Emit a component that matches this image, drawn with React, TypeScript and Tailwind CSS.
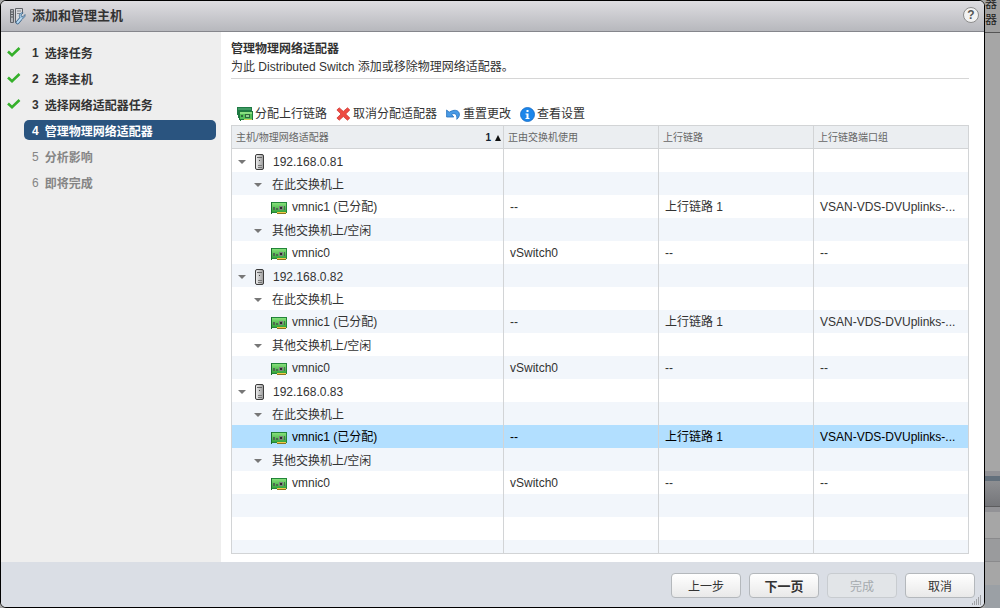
import type { ReactNode } from "react";

type Step = { label: string; state: "done" | "active" | "todo" };

const steps: Step[] = [
  { label: "选择任务", state: "done" },
  { label: "选择主机", state: "done" },
  { label: "选择网络适配器任务", state: "done" },
  { label: "管理物理网络适配器", state: "active" },
  { label: "分析影响", state: "todo" },
  { label: "即将完成", state: "todo" },
];

type Row = {
  kind: "host" | "group" | "nic" | "empty";
  name: string;
  usedBy?: string;
  uplink?: string;
  portGroup?: string;
  selected?: boolean;
};

const hosts = ["192.168.0.81", "192.168.0.82", "192.168.0.83"];

const rows: Row[] = [
  ...hosts.flatMap((host): Row[] => [
    { kind: "host", name: host },
    { kind: "group", name: "在此交换机上" },
    {
      kind: "nic",
      name: "vmnic1 (已分配)",
      usedBy: "--",
      uplink: "上行链路 1",
      portGroup: "VSAN-VDS-DVUplinks-...",
      selected: host === "192.168.0.83",
    },
    { kind: "group", name: "其他交换机上/空闲" },
    { kind: "nic", name: "vmnic0", usedBy: "vSwitch0", uplink: "--", portGroup: "--" },
  ]),
  { kind: "empty", name: "" },
  { kind: "empty", name: "" },
  { kind: "empty", name: "" },
];

function CheckIcon() {
  return (
    <svg width="14" height="12" viewBox="0 0 14 12" fill="none">
      <path d="M1 5.500 5 9.200 12.500 2" stroke="#35b02b" strokeWidth="2.600" />
    </svg>
  );
}

function WizardIcon() {
  return (
    <svg width="17" height="17" viewBox="0 0 17 17">
      <path d="M1.500 1.500h3v13h-3z" fill="#b4b6ba" stroke="#606368" />
      <path d="M2 4h2M2 6.500h2M2 9h2" stroke="#55585c" />
      <path d="M6.500 14.500V.5h7v5" fill="#d9dade" stroke="#606368" />
      <path d="M6.500 14.500h3l4-6v-3h-7z" fill="#d9dade" />
      <path d="M6.500 5v9.500H9" fill="none" stroke="#606368" />
      <path d="M8 3h4M8 5.500h3" stroke="#83868b" />
      <path d="m8.500 14.500 3-3.500" stroke="#3d6488" strokeWidth="3.600" strokeLinecap="round" />
      <path
        d="M16 6.500 14 8.800l-1.600-.4-.3-1.500 2-2c-2.800-.5-4.600 1.900-3.400 4.600 1.500 1.800 6 .8 5.300-3z"
        fill="#a6cdea"
        stroke="#3d6488"
        strokeWidth=".8"
      />
      <path d="m8.500 14.500 3.500-4" stroke="#b7d9f2" strokeWidth="2" strokeLinecap="round" />
    </svg>
  );
}

function HostIcon() {
  return (
    <svg width="9" height="16" viewBox="0 0 9 16" className="shrink-0">
      <defs>
        <linearGradient id="host" x1="0" x2="1" y1="0" y2="0">
          <stop offset="0" stopColor="#f1f1f1" />
          <stop offset="1" stopColor="#9a9a9a" />
        </linearGradient>
      </defs>
      <rect x=".5" y=".5" width="8" height="15" rx="1.500" fill="url(#host)" stroke="#3c3c3c" />
      <path d="M2 3.500h5" stroke="#666" />
      <path d="M3 11.500h4M3 13.500h4" stroke="#777" />
      <rect x="4" y="6" width="1" height="1" fill="#444" />
    </svg>
  );
}

function NicIcon() {
  return (
    <svg width="16" height="12" viewBox="0 0 16 12" shapeRendering="crispEdges" className="shrink-0">
      <defs>
        <linearGradient id="nic" x1="0" x2="0" y1="0" y2="1">
          <stop offset="0" stopColor="#86e07a" />
          <stop offset="1" stopColor="#35a53c" />
        </linearGradient>
      </defs>
      <rect width="16" height="11" fill="#23863a" />
      <rect width="1" height="12" fill="#176d2b" />
      <rect x="1" y="1" width="14" height="9" fill="url(#nic)" />
      <rect x="6" y="10" width="9" height="1" fill="#f0c94a" />
      <rect x="6" y="11" width="9" height="1" fill="#8c7420" />
      <rect x="2" y="5" width="2" height="3" fill="#4d6b4f" />
      <rect x="5" y="6" width="2" height="2" fill="#4d6b4f" />
      <rect x="8" y="4" width="4" height="4" fill="#7d827d" />
      <rect x="9" y="5" width="2" height="2" fill="#2b2b2b" />
      <rect x="13" y="4" width="1" height="4" fill="#4d6b4f" />
    </svg>
  );
}

function AssignIcon() {
  return (
    <svg width="16" height="14" viewBox="0 0 16 14" shapeRendering="crispEdges">
      <rect width="15" height="8" fill="#1f7a45" />
      <rect x="1" y="1" width="13" height="2" fill="#3f9a62" />
      <rect x="1" y="8" width="1" height="3" fill="#1f7a45" />
      <rect x="2" y="4" width="14" height="9" fill="#1f7a3c" />
      <rect x="3" y="5" width="12" height="7" fill="#55c05a" />
      <rect x="3" y="5" width="12" height="2" fill="#8ade80" />
      <rect x="4" y="8" width="2" height="2" fill="#2e6b3c" />
      <rect x="8" y="7" width="5" height="4" fill="#2e6b3c" />
      <rect x="9" y="8" width="3" height="2" fill="#8fcf8f" />
      <rect x="3" y="13" width="1" height="1" fill="#1f7a3c" />
      <rect x="7" y="12" width="8" height="1" fill="#c7cf5a" />
    </svg>
  );
}

function RemoveIcon() {
  return (
    <svg width="15" height="14" viewBox="0 0 15 14">
      <path
        d="M3.200.8 7.300 4.400 11.500.8 13.800 3 9.700 7l4.100 4-2.300 2.200-4.200-3.700-4.100 3.700L.9 11 5 7 .9 3z"
        fill="#ee4b42"
        stroke="#cf3a36"
        strokeWidth=".8"
      />
    </svg>
  );
}

function ResetIcon() {
  return (
    <svg width="15" height="12" viewBox="0 0 15 12">
      <path
        d="M.6 2v7h7.200L5.600 6.600C8 4.600 11.500 5.500 10.800 11.300 16.500 7 12.500-1.500 3.200 4.200z"
        fill="#4a9be6"
        stroke="#2470bd"
        strokeWidth=".8"
      />
    </svg>
  );
}

function InfoIcon() {
  return (
    <svg width="15" height="15" viewBox="0 0 15 15">
      <circle cx="7.500" cy="7.500" r="7" fill="#1c86ea" stroke="#1268c4" strokeWidth=".8" />
      <rect x="6.500" y="3" width="2" height="2" fill="#fff" />
      <path d="M5.500 6.500h3v4.500h1v1h-4v-1h1V7.500h-1z" fill="#fff" />
    </svg>
  );
}

function Arrow() {
  return (
    <svg width="8" height="4" viewBox="0 0 8 4" className="shrink-0">
      <path d="M0 0h8L4 4z" fill="#777" />
    </svg>
  );
}

function ToolButton({ icon, children }: { icon: ReactNode; children: ReactNode }) {
  return (
    <button className="flex items-center gap-0.5 whitespace-nowrap">
      {icon}
      {children}
    </button>
  );
}

function NameCell({ row }: { row: Row }) {
  if (row.kind === "host") {
    return (
      <div className="flex items-center gap-[9px] pt-0.5 pl-1.5">
        <Arrow />
        <HostIcon />
        {row.name}
      </div>
    );
  }
  if (row.kind === "group") {
    return (
      <div className="flex items-center gap-2.5 pt-0.5 pl-[22px]">
        <Arrow />
        {row.name}
      </div>
    );
  }
  if (row.kind === "nic") {
    return (
      <div className="flex items-center gap-[5px] pl-[39px]">
        <span className="pt-0.5">
          <NicIcon />
        </span>
        {row.name}
      </div>
    );
  }
  return null;
}

const buttonClass =
  "h-[25px] w-[70px] rounded border border-[#b4b8bc] bg-linear-to-b from-white to-[#e9e9e9] pt-0.5";

export default function App() {
  return (
    <div className="flex h-screen overflow-hidden bg-[#a6a6a6] font-['Liberation_Sans','Noto_Sans_CJK_SC',sans-serif] text-xs text-[#333]">
      <div className="relative flex min-w-0 flex-1 flex-col overflow-hidden rounded-md border border-black bg-white">
        {/* Title bar */}
        <header className="flex h-[31px] shrink-0 items-center border-b border-[#85868c] bg-linear-to-b from-[#dedde1] to-[#b7b8bd] pr-[5px] pl-2">
          <WizardIcon />
          <h1 className="ml-1.5 flex-1 text-[13px] font-bold">添加和管理主机</h1>
          <button
            aria-label="?"
            className="mb-0.5 size-4 rounded-full border border-[#8c8c8c] bg-[#f2f2f2] text-xs leading-none font-bold text-[#555]"
          >
            ?
          </button>
        </header>

        <div className="flex min-h-0 flex-1">
          {/* Wizard steps */}
          <nav className="w-[220px] shrink-0 bg-[#eee] pt-2.5">
            <ol className="flex flex-col gap-1.5">
              {steps.map((step, i) => (
                <li key={step.label} className="flex h-5 items-center pr-[5px]">
                  <span className="w-[23px] shrink-0 pl-1.5">{step.state === "done" && <CheckIcon />}</span>
                  <button
                    className={`flex h-5 flex-1 items-center gap-1.5 rounded-[5px] pt-[3px] pl-2 font-bold ${
                      step.state === "active" ? "bg-[#2a547f] text-white" : ""
                    } ${step.state === "todo" ? "text-[#858585]" : ""}`}
                  >
                    <span className={`pb-0.5 ${step.state === "todo" ? "font-normal" : ""}`}>{i + 1}</span>
                    <span>{step.label}</span>
                  </button>
                </li>
              ))}
            </ol>
          </nav>

          <main className="flex min-w-0 flex-1 flex-col pt-2 pr-[15px] pb-2 pl-2.5">
            <div className="border-b border-[#d6d6d6] pb-0.5">
              <h2 className="leading-[18px] font-bold">管理物理网络适配器</h2>
              <p className="leading-[18px]">为此 Distributed Switch 添加或移除物理网络适配器。</p>
            </div>

            {/* Toolbar */}
            <div className="mt-6 flex h-[22px] items-center gap-[9px] pl-1.5">
              <ToolButton icon={<AssignIcon />}>分配上行链路</ToolButton>
              <ToolButton icon={<RemoveIcon />}>取消分配适配器</ToolButton>
              <ToolButton icon={<ResetIcon />}>重置更改</ToolButton>
              <ToolButton icon={<InfoIcon />}>查看设置</ToolButton>
            </div>

            <div className="min-h-0 flex-1 overflow-hidden border border-[#d2d4d6]">
              <table className="w-full table-fixed border-separate border-spacing-0">
                <colgroup>
                  <col />
                  <col className="w-[155px]" />
                  <col className="w-[155px]" />
                  <col className="w-[154px]" />
                </colgroup>
                <thead>
                  <tr className="bg-[#ebeef1] text-left text-[10px] text-[#666] *:h-[23px] *:border-b *:border-[#d2d4d6] *:p-0 *:pt-0.5 *:pl-1 *:font-normal">
                    <th className="border-r">
                      <div className="flex items-center justify-between">
                        主机/物理网络适配器
                        <span className="flex items-center gap-1 pr-0.5 font-bold text-[#123]">
                          1
                          <svg width="6" height="6" viewBox="0 0 6 6">
                            <path d="M3 0 6 6H0z" fill="#111" />
                          </svg>
                        </span>
                      </div>
                    </th>
                    <th className="border-r">正由交换机使用</th>
                    <th className="border-r">上行链路</th>
                    <th>上行链路端口组</th>
                  </tr>
                </thead>
                <tbody>
                  {rows.map((row, i) => (
                    <tr
                      key={i}
                      className={`whitespace-nowrap *:h-[23px] *:border-[#d2d4d6] *:p-0 ${
                        row.selected ? "bg-[#b2dfff] text-black" : "odd:bg-white even:bg-[#f2f6fb]"
                      }`}
                    >
                      <td className="border-r">
                        <NameCell row={row} />
                      </td>
                      <td className="border-r">
                        <div className="pl-1.5">{row.usedBy}</div>
                      </td>
                      <td className="border-r">
                        <div className="pl-1.5">{row.uplink}</div>
                      </td>
                      <td>
                        <div className="pl-1.5">{row.portGroup}</div>
                      </td>
                    </tr>
                  ))}
                </tbody>
              </table>
            </div>
          </main>
        </div>

        {/* Footer buttons */}
        <footer className="flex h-[45px] shrink-0 items-center justify-end gap-2 bg-[#dadee5] pt-0.5 pr-[9px]">
          <button className={buttonClass}>上一步</button>
          <button className={`${buttonClass} text-[13px] font-bold`}>下一页</button>
          <button disabled className="h-[25px] w-[70px] rounded border border-[#c8ccd0] bg-[#e2e5e8] pt-0.5 text-[#a5aaae]">
            完成
          </button>
          <button className={buttonClass}>取消</button>
        </footer>
        <svg width="10" height="10" viewBox="0 0 10 10" className="absolute right-0.5 bottom-0.5">
          <path d="M8 1h1M6 3h3M4 5h5M2 7h7M0 9h9" stroke="#666" strokeDasharray="1 1" />
        </svg>
      </div>

      {/* Dimmed page behind the dialog */}
      <aside className="flex w-[15px] shrink-0 flex-col overflow-hidden">
        <div className="flex h-[33px] shrink-0 flex-col justify-end border-b border-[#555] bg-[#a0a0a0] pb-1 leading-4 text-[#222]">
          <span>器</span>
          <span>器</span>
        </div>
        <div className="flex-1" />
        <div className="h-[5px] bg-[#929296]" />
        <div className="h-[5px] bg-[#63707c]" />
        <div className="h-[26px] border-b border-[#5c5c5e] bg-linear-to-b from-[#8e8f92] to-[#75767a]" />
        <div className="h-[5px] bg-[#929296]" />
        <div className="h-[27px] border-b border-[#8a8a8c]" />
        <div className="h-[23px] border-b border-[#8a8a8c] bg-[#9a9b9d]" />
        <div className="h-[23px]" />
        <div className="h-[23px] bg-[#9ba0a5]" />
      </aside>
    </div>
  );
}
